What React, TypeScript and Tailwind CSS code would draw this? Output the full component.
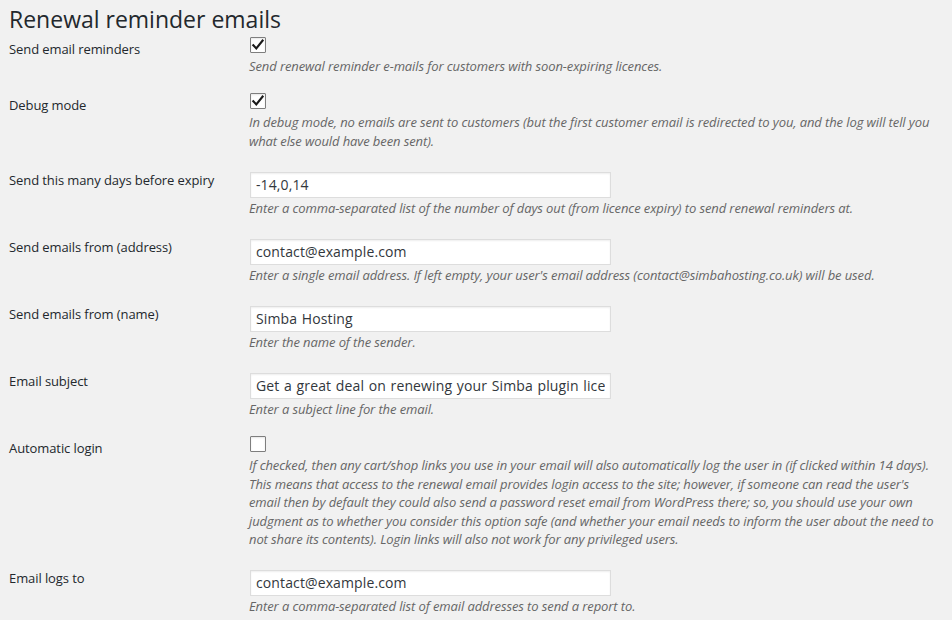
import React from "react";

type Row = {
  label: string;
  type: "checkbox" | "text";
  checked?: boolean;
  value?: string;
  desc: string;
  mt: string;
};

const rows: Row[] = [
  {
    label: "Send email reminders",
    type: "checkbox",
    checked: true,
    desc: "Send renewal reminder e-mails for customers with soon-expiring licences.",
    mt: "mt-[3px]",
  },
  {
    label: "Debug mode",
    type: "checkbox",
    checked: true,
    desc: "In debug mode, no emails are sent to customers (but the first customer email is redirected to you, and the log will tell you what else would have been sent).",
    mt: "mt-[17.5px]",
  },
  {
    label: "Send this many days before expiry",
    type: "text",
    value: "-14,0,14",
    desc: "Enter a comma-separated list of the number of days out (from licence expiry) to send renewal reminders at.",
    mt: "mt-[22px]",
  },
  {
    label: "Send emails from (address)",
    type: "text",
    value: "contact@example.com",
    desc: "Enter a single email address. If left empty, your user's email address (contact@simbahosting.co.uk) will be used.",
    mt: "mt-[21.5px]",
  },
  {
    label: "Send emails from (name)",
    type: "text",
    value: "Simba Hosting",
    desc: "Enter the name of the sender.",
    mt: "mt-[21.5px]",
  },
  {
    label: "Email subject",
    type: "text",
    value: "Get a great deal on renewing your Simba plugin licences",
    desc: "Enter a subject line for the email.",
    mt: "mt-[21.5px]",
  },
  {
    label: "Automatic login",
    type: "checkbox",
    checked: false,
    desc: "If checked, then any cart/shop links you use in your email will also automatically log the user in (if clicked within 14 days). This means that access to the renewal email provides login access to the site; however, if someone can read the user's email then by default they could also send a password reset email from WordPress there; so, you should use your own judgment as to whether you consider this option safe (and whether your email needs to inform the user about the need to not share its contents). Login links will also not work for any privileged users.",
    mt: "mt-[17.5px]",
  },
  {
    label: "Email logs to",
    type: "text",
    value: "contact@example.com",
    desc: "Enter a comma-separated list of email addresses to send a report to.",
    mt: "mt-[21.5px]",
  },
];

function Checkbox({ checked }: { checked?: boolean }) {
  return (
    <div className="ml-[1px] w-[16px] h-[16px] bg-white border border-[#7e7e7e] rounded-[1px] shadow-[inset_0_1px_2px_rgba(0,0,0,0.1)] flex items-center justify-center">
      {checked && (
        <svg width="14" height="14" viewBox="0 0 14 14">
          <path
            d="M2.3 7.2 L5.3 10.4 L11.6 2.6"
            fill="none"
            stroke="#1a1a1a"
            strokeWidth="2.1"
            strokeLinecap="square"
            strokeLinejoin="miter"
          />
        </svg>
      )}
    </div>
  );
}

export default function App() {
  return (
    <div
      className="w-[952px] h-[620px] overflow-hidden bg-[#f1f1f1] pl-[9px] pr-[12px]"
      style={{ fontFamily: '"Open Sans", "DejaVu Sans", sans-serif' }}
    >
      <h1 className="pt-[5px] text-[23px] leading-[29px] font-normal text-[#23282d]">
        Renewal reminder emails
      </h1>
      {rows.map((r, i) => (
        <div key={i} className={`flex ${r.mt}`}>
          <div
            className={`w-[240px] shrink-0 text-[13px] leading-[16px] tracking-[-0.09px] text-[#23282d] ${
              r.type === "checkbox" ? "pt-[4px]" : "pt-0"
            }`}
          >
            {r.label}
          </div>
          <div className="flex-1 min-w-0">
            {r.type === "checkbox" ? (
              <Checkbox checked={r.checked} />
            ) : (
              <div className="ml-[1px] w-[361px] h-[26px] bg-white border border-[#dddddd] shadow-[inset_0_1px_2px_rgba(0,0,0,0.07)] px-[5px] text-[14px] leading-[24px] tracking-[0.12px] [word-spacing:0.9px] text-[#32373c]">
                <div className="whitespace-nowrap overflow-hidden">{r.value}</div>
              </div>
            )}
            <p
              className={`${
                r.type === "checkbox" ? "mt-[4px]" : "mt-[1px]"
              } text-[13px] leading-[18.5px] tracking-[-0.1px] italic text-[#666666]`}
            >
              {r.desc}
            </p>
          </div>
        </div>
      ))}
    </div>
  );
}
